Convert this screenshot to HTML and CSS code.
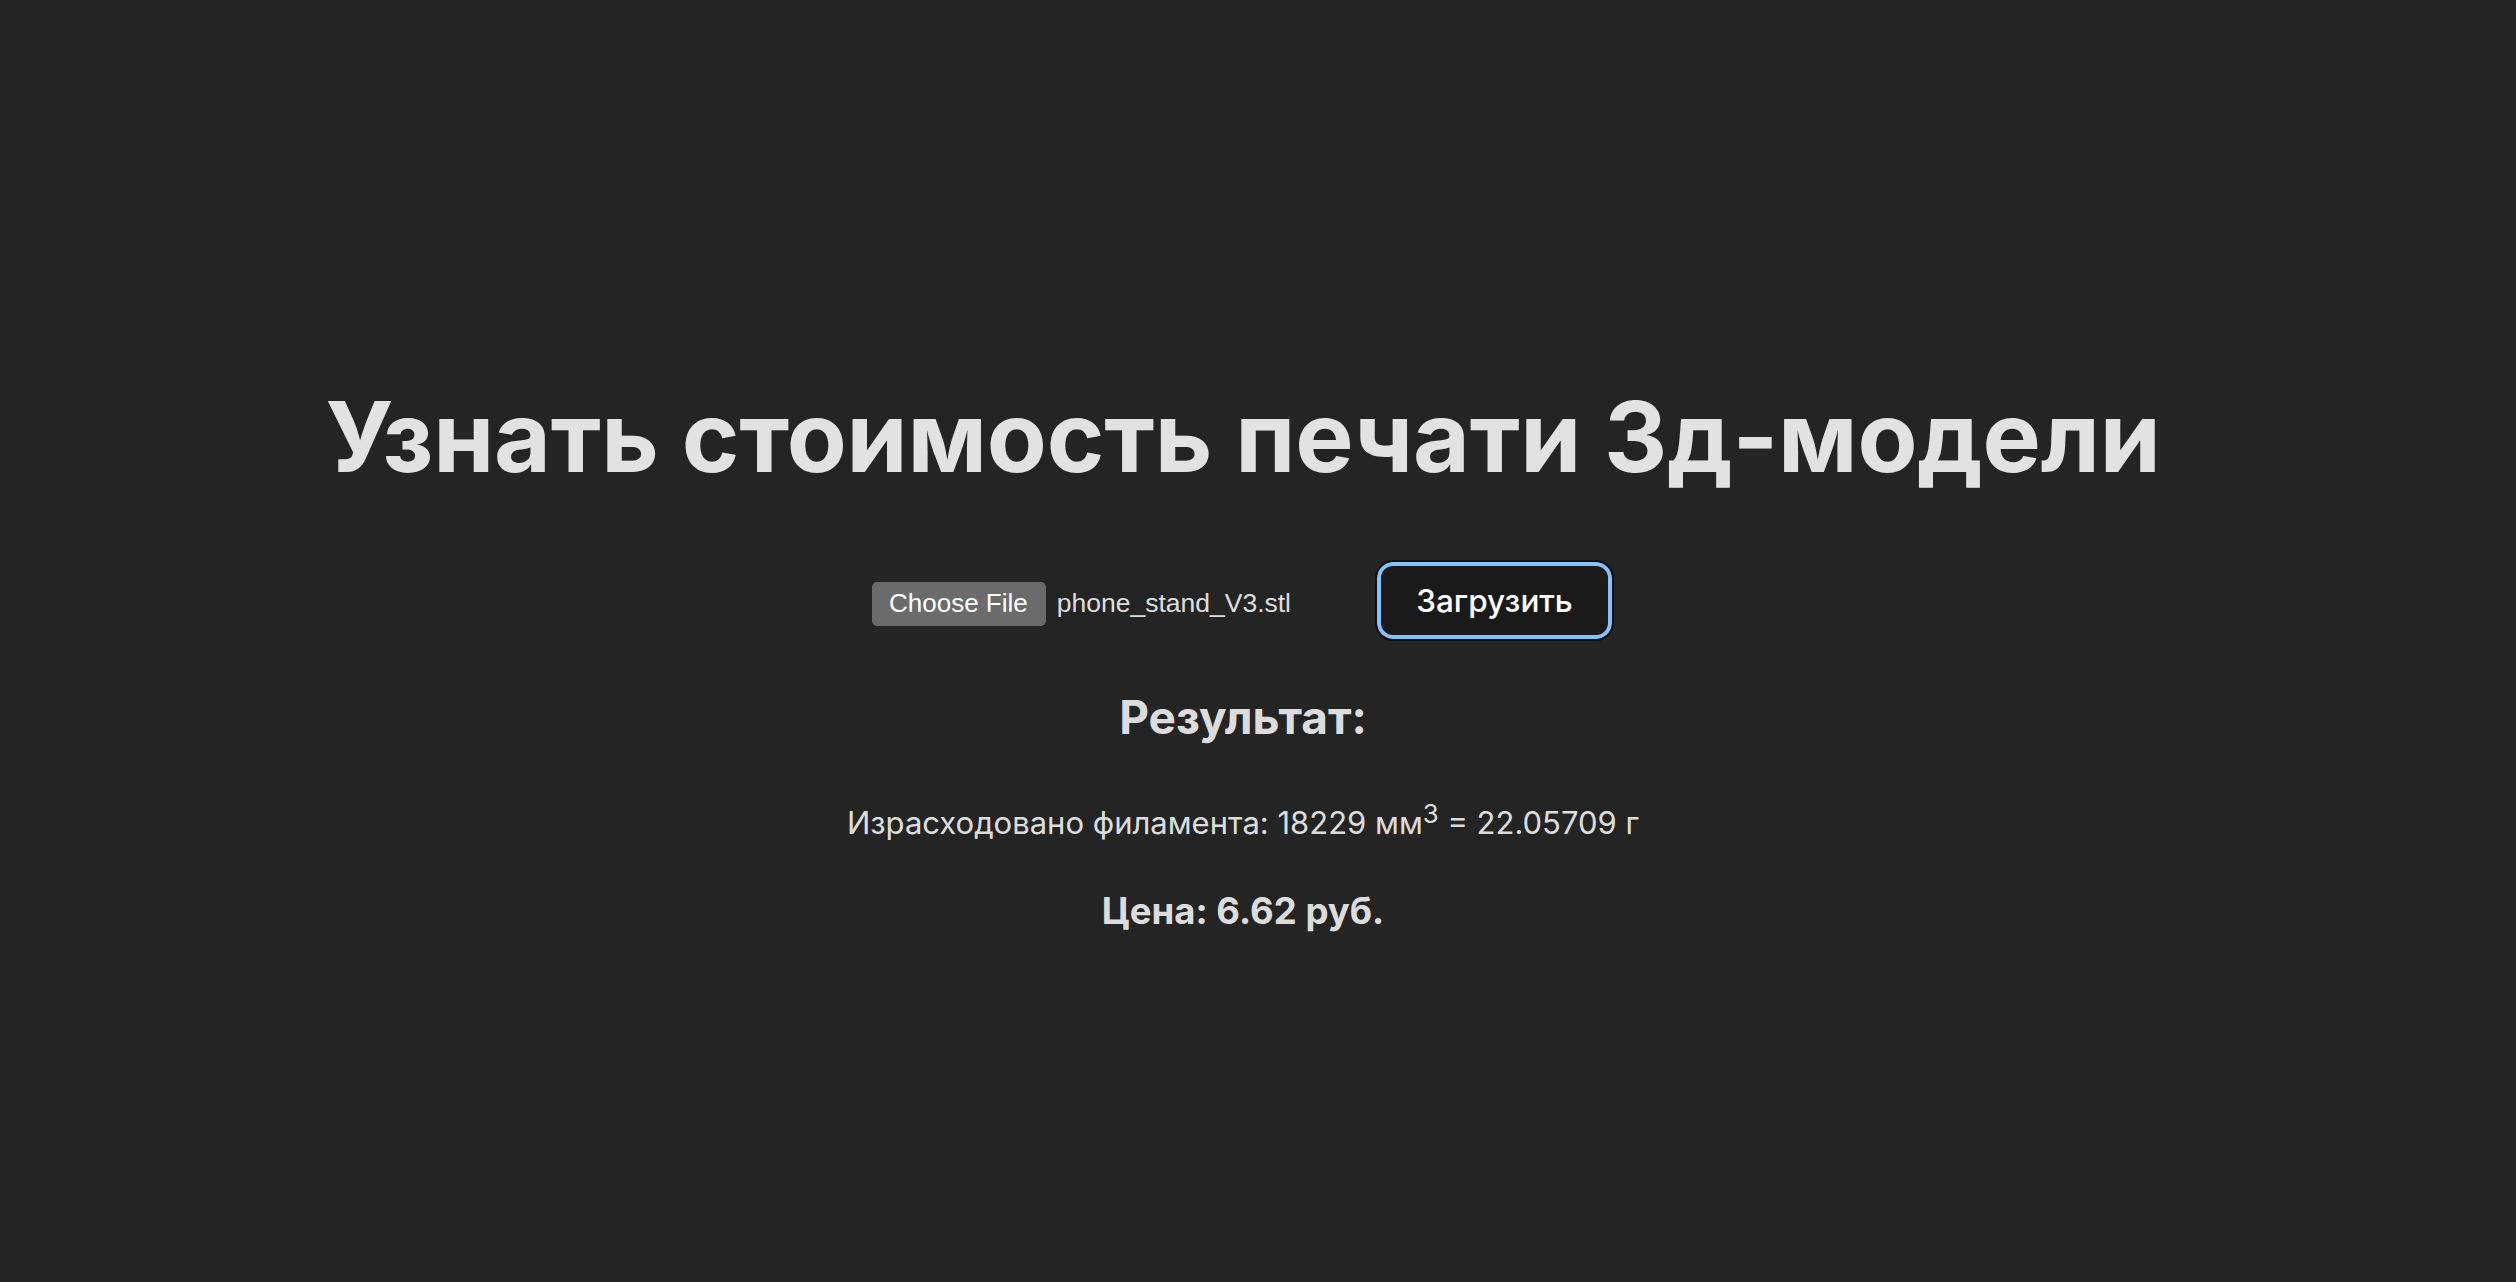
FILE: index.html
```html
<!DOCTYPE html>
<html lang="ru">
<head>
<meta charset="utf-8">
<title>Стоимость печати</title>
<link rel="stylesheet" href="styles.css">
</head>
<body>
<main class="page">
  <h1 class="title">Узнать стоимость печати 3д-модели</h1>
  <form class="upload-row">
    <div class="file-input">
      <span class="file-btn">Choose File</span>
      <span class="file-name">phone_stand_V3.stl</span>
    </div>
    <button type="button" class="upload-btn">Загрузить</button>
  </form>
  <h2 class="result-title">Результат:</h2>
  <p class="result-line">Израсходовано филамента: 18229 мм<sup>3</sup> = 22.05709 г</p>
  <h3 class="price">Цена: 6.62 руб.</h3>
</main>
</body>
</html>
```

FILE: styles.css
```css
html, body {
  margin: 0;
  padding: 0;
  background: #242424;
}

body {
  font-family: Inter, "Noto Sans", sans-serif;
  color: rgba(255, 255, 255, 0.87);
  min-height: 100vh;
}

.page {
  display: flex;
  flex-direction: column;
  align-items: center;
  padding: 382px 30px 0 0;
  text-align: center;
}

.title {
  margin: 0;
  font-size: 98px;
  line-height: 109px;
  font-weight: 700;
  letter-spacing: -0.2px;
}

.upload-row {
  margin-top: 69px;
  display: flex;
  align-items: baseline;
}

.file-input {
  width: 495px;
  display: flex;
  align-items: baseline;
  font-family: "Liberation Sans", Arial, sans-serif;
  font-size: 26px;
}

.file-btn {
  background: #6b6b6b;
  color: #fff;
  border-radius: 5px;
  padding: 6px 18px 7px 17px;
  margin-right: 11px;
}

.file-name {
  font-size: 26.5px;
  color: rgba(255, 255, 255, 0.87);
}

.upload-btn {
  margin-left: 8px;
  width: 239px;
  height: 81px;
  border: 2px solid #101010;
  border-radius: 18px;
  box-shadow: inset 0 0 0 4px #85c2f8;
  background: #1a1a1a;
  color: #fff;
  font-family: Inter, "Noto Sans", sans-serif;
  font-size: 31.5px;
  font-weight: 500;
  padding: 0;
  cursor: pointer;
}

.result-title {
  margin: 49px 0 0;
  font-size: 46px;
  line-height: 55px;
  font-weight: 700;
}

.result-line {
  margin: 59px 0 0;
  font-size: 31px;
  line-height: 37px;
}

.result-line sup {
  font-size: 0.83em;
  line-height: 0;
}

.price {
  margin: 49px 0 0;
  font-size: 36.5px;
  line-height: 43px;
  font-weight: 700;
}
```
